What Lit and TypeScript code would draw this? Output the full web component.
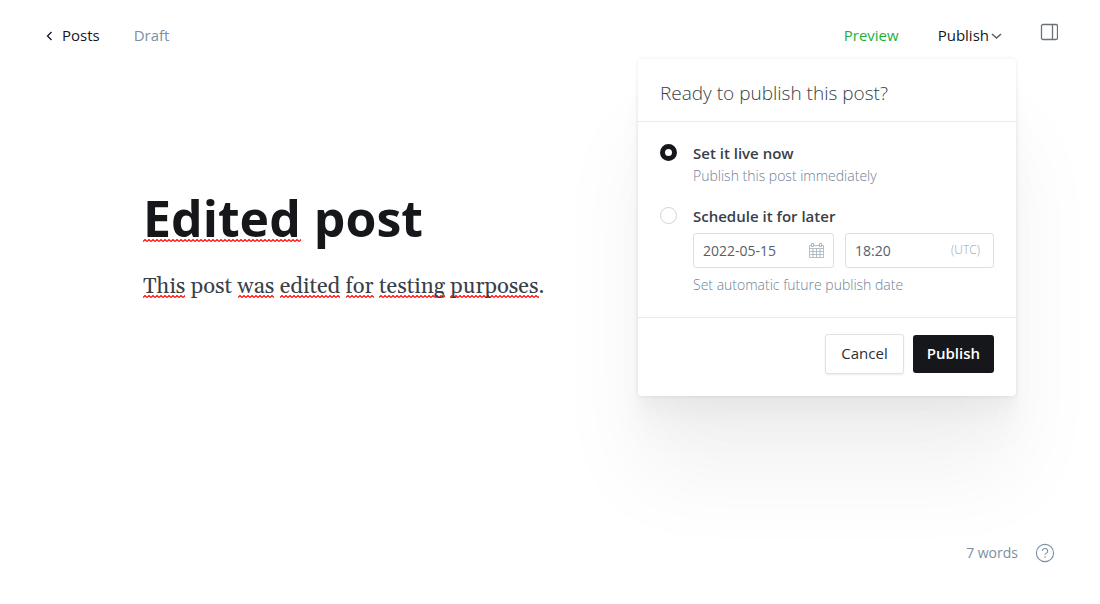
import { LitElement, html, css } from "lit";
import { customElement, state } from "lit/decorators.js";

@customElement("publish-menu")
class PublishMenu extends LitElement {
  @state() private mode: "now" | "later" = "now";

  static styles = css`
    :host {
      display: block;
      width: 378px;
      background: #fff;
      border-radius: 4px;
      color: #394047;
      box-shadow:
        0 0 4px rgba(0, 0, 0, 0.07),
        0 3px 6px rgba(0, 0, 0, 0.02),
        0 13px 10px rgba(0, 0, 0, 0.01),
        0 22px 18px rgba(0, 0, 0, 0.02),
        0 42px 34px rgba(0, 0, 0, 0.02),
        0 80px 90px rgba(0, 0, 0, 0.05);
    }
    * { box-sizing: border-box; }
    .head {
      margin: 0;
      padding: 20px 22px 14px;
      border-bottom: 1px solid #e8eaec;
      font-size: 19px;
      line-height: 28px;
      font-weight: 300;
    }
    .body {
      display: flex;
      flex-direction: column;
      gap: 20px;
      margin: 0;
      padding: 22px 22px 21px;
      border: 0;
      min-width: 0;
    }
    .option {
      display: grid;
      grid-template-columns: 17px minmax(0, 1fr);
      column-gap: 16px;
    }
    .radio {
      appearance: none;
      width: 17px;
      height: 17px;
      margin: 0;
      border: 1px solid #ced4d9;
      border-radius: 50%;
      background: #fff;
    }
    .radio:checked { border: 5px solid #15171a; }
    .name {
      display: block;
      margin-bottom: 2px;
      font-size: 15px;
      line-height: 19px;
      font-weight: 600;
    }
    .hint {
      display: block;
      font-size: 14px;
      line-height: 22px;
      font-weight: 300;
      color: #6f8196;
    }
    .fields {
      display: grid;
      grid-template-columns: 141px minmax(0, 1fr);
      gap: 11px;
      margin: 7px 0 6px;
    }
    .field {
      display: flex;
      align-items: center;
      height: 35px;
      padding: 0 9px;
      border: 1px solid #dddfe2;
      border-radius: 3px;
      color: #9aa5b0;
      font-size: 12px;
      font-weight: 300;
    }
    .zone { padding: 0 4px 2px 0; }
    .input {
      flex: 1;
      min-width: 0;
      padding: 0;
      border: 0;
      outline: 0;
      background: none;
      color: #56606a;
      font: 400 14px/20px var(--ui);
    }
    .foot {
      display: flex;
      justify-content: flex-end;
      gap: 9px;
      padding: 16px 22px 22px;
      border-top: 1px solid #e8eaec;
    }
    .btn {
      height: 40px;
      padding: 0 15px 2px;
      border: 1px solid #dfe2e5;
      border-radius: 3px;
      background: #fff;
      color: #2b3036;
      font: 500 15px/20px var(--ui);
      box-shadow: 0 1px 2px rgba(0, 0, 0, 0.08);
    }
    .primary {
      height: 38px;
      margin-top: 1px;
      padding: 0 14px 2px;
      border: 0;
      background: #15171a;
      color: #fff;
      font-weight: 600;
      box-shadow: none;
    }
  `;

  render() {
    return html`
      <h2 class="head">Ready to publish this post?</h2>
      <fieldset class="body" aria-label="Publish time">
        <div class="option">
          <input class="radio" type="radio" name="when" id="now"
            .checked=${this.mode === "now"} @change=${() => (this.mode = "now")} />
          <label for="now">
            <span class="name">Set it live now</span>
            <span class="hint">Publish this post immediately</span>
          </label>
        </div>
        <div class="option">
          <input class="radio" type="radio" name="when" id="later"
            .checked=${this.mode === "later"} @change=${() => (this.mode = "later")} />
          <div>
            <label class="name" for="later">Schedule it for later</label>
            <div class="fields">
              <label class="field">
                <input class="input" aria-label="Date" value="2022-05-15" />
                <svg width="15" height="15" viewBox="0 0 15 15" fill="none" stroke="currentColor">
                  <path d="M.5 2.5h14v12H.5zM.5 5.5h14M1 8.5h13M1 11.5h13M4 5.5v9M7.5 5.5v9M11 5.5v9" stroke-width=".7" />
                  <path d="M2.5.5h2v3h-2zM10.5.5h2v3h-2z" fill="#fff" stroke-width=".8" />
                </svg>
              </label>
              <label class="field">
                <input class="input" aria-label="Time" value="18:20" />
                <span class="zone">(UTC)</span>
              </label>
            </div>
            <span class="hint">Set automatic future publish date</span>
          </div>
        </div>
      </fieldset>
      <div class="foot">
        <button class="btn" type="button">Cancel</button>
        <button class="btn primary" type="button">Publish</button>
      </div>
    `;
  }
}

@customElement("app-root")
class AppRoot extends LitElement {
  @state() private open = true;

  static styles = css`
    :host {
      --ui: "Open Sans", "Noto Sans", sans-serif;
      display: flex;
      flex-direction: column;
      min-height: 100vh;
      box-sizing: border-box;
      background: #fff;
      font-family: var(--ui);
      color: #394047;
    }
    .top {
      display: flex;
      align-items: center;
      justify-content: space-between;
      padding: 21px 42px 0 45px;
      font-size: 15px;
      line-height: 28px;
    }
    .group { display: flex; align-items: center; }
    .crumbs { gap: 34px; }
    .back {
      display: flex;
      align-items: center;
      gap: 8px;
      color: #15171a;
      text-decoration: none;
      font-weight: 500;
    }
    .status { color: #7c8fa3; }
    .text-btn {
      padding: 0;
      border: 0;
      background: none;
      color: #15171a;
      font: 500 15px/28px var(--ui);
    }
    .preview { color: #1fae3c; }
    .anchor { position: relative; margin: 0 24px 0 39px; padding-right: 14px; }
    .trigger { display: flex; align-items: center; gap: 2px; }
    .menu {
      position: absolute;
      top: 38px;
      right: 0;
      z-index: 1;
    }
    .panel-btn { display: flex; padding: 0 0 6px; }
    .page { flex: 1; padding: 133px 143px 0; }
    .title {
      margin: 0;
      font-size: 50px;
      line-height: 72px;
      font-weight: 700;
      color: #15171a;
    }
    .copy {
      margin: 15px 0 0;
      font: 22px/36px Georgia, Gelasio, "Liberation Serif", serif;
    }
    .miss {
      background: url("data:image/svg+xml,%3Csvg xmlns='http://www.w3.org/2000/svg' width='4' height='3'%3E%3Cpath d='M0 2.5L2 .5L4 2.5' fill='none' stroke='red' stroke-width='1.1'/%3E%3C/svg%3E") repeat-x 0 calc(100% - 3px);
    }
    .title .miss { background-position: 0 calc(100% - 10px); }
    .bottom {
      display: flex;
      align-items: center;
      justify-content: flex-end;
      gap: 17px;
      padding: 0 45px 41px;
      font-size: 14px;
      line-height: 20px;
      color: #7c8fa3;
    }
    .help { display: flex; color: inherit; }
  `;

  render() {
    return html`
      <header class="top">
        <nav class="group crumbs">
          <a class="back" href="#posts">
            <svg width="9" height="12" viewBox="0 0 9 12" fill="none" stroke="currentColor" stroke-width="1.3"><path d="M6.5 3L2.5 7l4 4" /></svg>
            Posts
          </a>
          <span class="status">Draft</span>
        </nav>
        <div class="group">
          <button class="text-btn preview" type="button">Preview</button>
          <div class="anchor">
            <button class="text-btn trigger" type="button" aria-expanded=${this.open}
              @click=${() => (this.open = !this.open)}>
              Publish
              <svg width="11" height="10" viewBox="0 0 11 10" fill="none" stroke="#5a636c" stroke-width="1.6"><path d="M1 4l4.500 4L10 4" /></svg>
            </button>
            ${this.open ? html`<publish-menu class="menu"></publish-menu>` : ""}
          </div>
          <button class="text-btn panel-btn" type="button" aria-label="Settings">
            <svg width="18" height="18" viewBox="0 0 18 18" fill="none" stroke="#6a727a" stroke-width="1.3"><rect x="1.5" y="1.5" width="16" height="15" rx="1.5" /><path d="M12.5 1.5v15" /></svg>
          </button>
        </div>
      </header>
      <main class="page">
        <h1 class="title"><span class="miss">Edited</span> post</h1>
        <p class="copy"><span class="miss">This</span> post <span class="miss">was</span> <span class="miss">edited</span> <span class="miss">for</span> <span class="miss">testing</span> <span class="miss">purposes</span>.</p>
      </main>
      <footer class="bottom">
        <span>7 words</span>
        <a class="help" href="#help" aria-label="Help">
          <svg width="20" height="20" viewBox="0 0 20 20" fill="none" stroke="currentColor" stroke-width="1.1"><circle cx="10" cy="10" r="8.6" /><path d="M7.3 8a2.7 2.5 0 1 1 4.2 2.1c-.9.6-1.5 1-1.5 2" /><circle cx="10" cy="14" r=".3" /></svg>
        </a>
      </footer>
    `;
  }
}
